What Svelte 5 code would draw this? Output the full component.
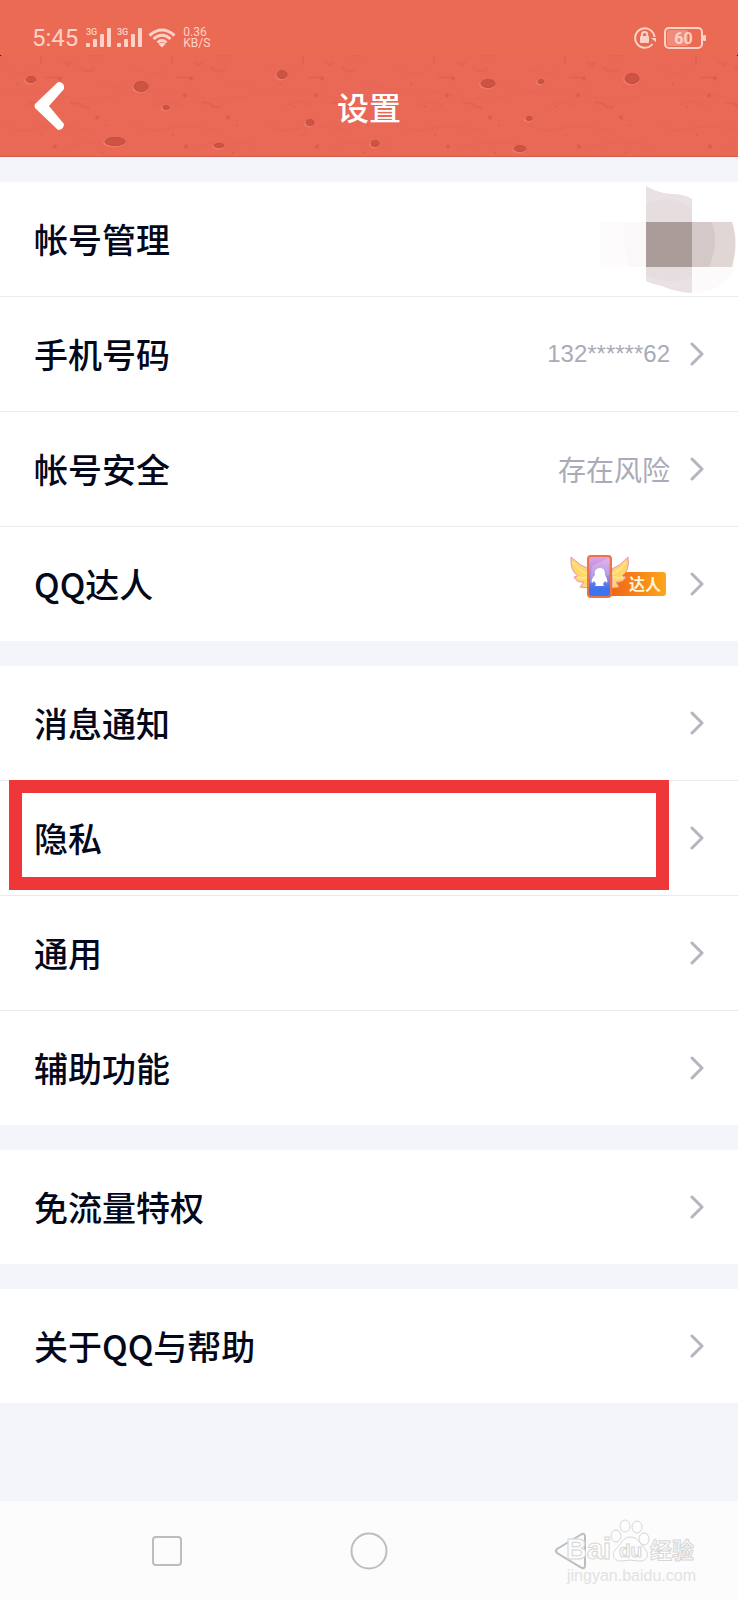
<script lang="ts">
	type Item = {
		label: string;
		value?: string;
		kind?: 'avatar' | 'phone' | 'badge';
		marked?: boolean;
	};

	const groups: Item[][] = [
		[
			{ label: '帐号管理', kind: 'avatar' },
			{ label: '手机号码', value: '132******62', kind: 'phone' },
			{ label: '帐号安全', value: '存在风险' },
			{ label: 'QQ达人', kind: 'badge' }
		],
		[
			{ label: '消息通知' },
			{ label: '隐私', marked: true },
			{ label: '通用' },
			{ label: '辅助功能' }
		],
		[{ label: '免流量特权' }],
		[{ label: '关于QQ与帮助' }]
	];

	// cx, cy, rx, ry
	const pits = [
		[31, 25, 5, 3],
		[141, 32, 7, 5],
		[282, 20, 5, 4],
		[166, 53, 3, 2],
		[115, 87, 10, 4],
		[219, 91, 5, 2],
		[310, 68, 4, 3],
		[375, 89, 4, 3],
		[488, 29, 7, 4],
		[541, 27, 3, 2],
		[529, 64, 3, 2],
		[520, 94, 6, 3],
		[632, 24, 7, 5]
	];
</script>

{#snippet signal()}
	<svg class="signal" viewBox="0 0 26 22" aria-hidden="true">
		<text x="0" y="8" font-size="9" font-weight="500">3G</text>
		<rect x="0" y="16" width="4" height="4" rx="1" />
		<rect x="7" y="12" width="4" height="8" rx="1" />
		<rect x="14" y="7" width="4" height="13" rx="1" />
		<rect x="21" y="1" width="4" height="19" rx="1" />
	</svg>
{/snippet}

<div class="screen">
	<div class="status">
		<span class="time">5:45</span>
		{@render signal()}
		{@render signal()}
		<svg class="wifi" viewBox="0 0 28 22" aria-hidden="true">
			<g fill="none" stroke="#ffd2c8" stroke-width="3">
				<path d="M1.5 8.500Q14-2.500 26.500 8.500" />
				<path d="M5.500 12Q14 4.500 22.500 12" />
				<path d="M9.500 15.500Q14 11.500 18.500 15.500" />
			</g>
			<path d="M10.500 17Q14 14.500 17.500 17L14 20.500Z" />
		</svg>
		<span class="speed">0.36<br />KB/S</span>
		<svg class="lock" viewBox="0 0 22 22" aria-hidden="true">
			<path
				d="M20.500 10A9.700 9.700 0 1 0 18.500 17"
				fill="none"
				stroke="#ffd2c8"
				stroke-width="2"
			/>
			<path d="M17 11H22V15Z" />
			<rect x="6" y="9" width="9" height="7" rx="1" />
			<path d="M8 9.500V7.500a2.600 2.600 0 0 1 5.200 0V9.500" fill="none" stroke="#ffd2c8" stroke-width="2" />
		</svg>
		<svg class="battery" viewBox="0 0 42 22" aria-hidden="true">
			<rect x="3" y="3" width="21" height="16" rx="2" fill="#f08c7a" />
			<rect x="1" y="1" width="37" height="20" rx="4" fill="none" stroke="#ffd2c8" stroke-width="2" />
			<rect x="39" y="8" width="3" height="6" rx="1" />
			<text x="19.500" y="17" font-size="16" font-weight="700" text-anchor="middle">60</text>
		</svg>
	</div>

	<header>
		<svg class="texture" viewBox="0 0 738 102" preserveAspectRatio="xMidYMid slice" aria-hidden="true">
			<defs>
				<pattern id="grain" width="131" height="102" patternUnits="userSpaceOnUse">
					<g fill="none" stroke="#d95745" stroke-linecap="round">
						<path d="M41 2v7M64 8l5 3M69 9l3-1M46 23h12M80 13q6 6 14 2" stroke-width="2" opacity="0.4" />
						<path d="M71 48l8 1 3 3 7 1" stroke-width="2" opacity="0.5" />
						<path d="M88 1h12M25 51q13-8 25 1" stroke-width="2" opacity="0.2" />
						<path d="M0 39q30-7 61 2t70-3M20 77q30-9 70-1" opacity="0.2" />
						<path d="M3 70q22 12 43 2M66 93q24-9 60-3M4 15q17 7 32 1M99 32q15-4 28 4" opacity="0.2" />
					</g>
					<g fill="#d45342" opacity="0.6">
						<circle cx="60" cy="24" r="2" />
						<circle cx="54" cy="41" r="2" />
						<circle cx="97" cy="63" r="2" />
						<circle cx="55" cy="92" r="2" />
						<circle cx="32" cy="52" r="1" />
						<circle cx="18" cy="30" r="1" />
						<circle cx="106" cy="71" r="1" />
						<circle cx="42" cy="80" r="1" />
						<circle cx="102" cy="98" r="1" />
					</g>
				</pattern>
			</defs>
			<rect width="738" height="102" fill="url(#grain)" />
			{#each pits as [cx, cy, rx, ry]}
				<ellipse cx={cx - 1} cy={cy + 1} rx={rx + 1} ry={ry + 1} fill="#f28474" opacity="0.6" />
				<ellipse {cx} {cy} {rx} {ry} fill="#cc5443" stroke="#c64d3d" />
			{/each}
			<path d="M0 0h4q-3 0-4 2zM738 0h-4q3 0 4 2z" fill="#1b0c0a" />
		</svg>
		<button class="back" aria-label="返回">
			<svg viewBox="0 0 30 48" aria-hidden="true">
				<path d="M25 0Q31 1 30 7L15 24 30 42Q30 47 25 48Q23 48 22 46L2 27Q-1 24 2 21L22 2Q23 0 25 0Z" />
			</svg>
		</button>
		<h1>设置</h1>
	</header>

	<main>
		{#each groups as group}
			<ul>
				{#each group as item}
					<li>
						<button class="row" class:flush={item.kind === 'avatar'}>
							<span class="label">{item.label}</span>
							{#if item.kind === 'avatar'}
								<svg class="avatar" viewBox="0 0 136 110" aria-hidden="true">
									<rect y="38" width="46" height="45" fill="#fdfbfc" />
									<path d="M24 38h22v45H30Q22 60 24 38Z" fill="#faf8f9" />
									<path d="M92 83h43Q126 108 92 108Z" fill="#fcfafb" />
									<path d="M46 2Q58 9 72 10Q84 10 92 15V109Q75 108 62 102 55 101 46 97Z" fill="#e9e1e3" />
									<path d="M46 20Q72 10 92 24V38H46ZM46 83h46v10q-22 9-46-2Z" fill="#e6dddf" />
									<path d="M92 38h40q7 20 0 45H92Z" fill="#e0d6d4" />
									<path d="M92 38h20q7 22-3 45H92Z" fill="#d5c8c8" />
									<rect x="46" y="38" width="46" height="45" fill="#aa9c99" />
								</svg>
							{:else}
								{#if item.kind === 'badge'}
									<svg class="badge" viewBox="0 0 100 60" aria-hidden="true">
										<defs>
											<linearGradient id="tag" x2="1">
												<stop stop-color="#ee5c16" />
												<stop offset="1" stop-color="#fda61b" />
											</linearGradient>
											<linearGradient id="phone" x2="0" y2="1">
												<stop stop-color="#e5a2e4" />
												<stop offset="0.500" stop-color="#9c86e4" />
												<stop offset="0.800" stop-color="#3d72ee" />
												<stop offset="1" stop-color="#3978f2" />
											</linearGradient>
										</defs>
										<rect x="34" y="18" width="62" height="24" rx="3" fill="url(#tag)" />
										<g fill="#ffd66a" stroke="#ed8db2" stroke-linejoin="round">
											<path d="M1 3Q10 12 19 15V34L10 33 14 28Q7 29 4 23L8 22Q0 17 1 3Z" />
											<path d="M58 3Q50 12 42 15V34L49 33 46 28Q53 29 56 23L52 22Q60 17 58 3Z" />
										</g>
										<path d="M3 8q6 9 15 12M7 23q6 2 11 0M56 8q-5 9-14 12M53 23q-5 2-10 0" fill="none" stroke="#ffe58a" stroke-width="2" />
										<rect x="18" y="2" width="23" height="41" rx="3" fill="url(#phone)" stroke="#ed7442" stroke-width="2" />
										<path d="M22 12 39 4V21L20 29Z" fill="#ffffff" opacity="0.2" />
										<path
											d="M30 14c-4 0-6 3-5 7-3 3-4 6-3 8l2-2 2 3-1 2h9l-1-2 2-3 2 2c1-2 0-5-2-8 0-4-1-7-5-7Z"
											fill="#ffffff"
										/>
										<text x="75" y="36" text-anchor="middle">达人</text>
									</svg>
								{:else if item.value}
									<span class="value" class:phone={item.kind === 'phone'}>{item.value}</span>
								{/if}
								<svg class="chevron" viewBox="0 0 14 24" aria-hidden="true">
									<path d="M2 2 12 12 2 22" />
								</svg>
							{/if}
						</button>
						{#if item.marked}
							<div class="mark"></div>
						{/if}
					</li>
				{/each}
			</ul>
		{/each}
	</main>

	<nav>
		<button aria-label="最近任务">
			<svg viewBox="0 0 40 40" aria-hidden="true"><rect x="6" y="6" width="28" height="28" rx="3" /></svg>
		</button>
		<button aria-label="主屏幕">
			<svg viewBox="0 0 40 40" aria-hidden="true"><circle cx="20" cy="20" r="17.500" /></svg>
		</button>
		<button aria-label="返回上一级">
			<svg viewBox="0 0 40 40" aria-hidden="true">
				<path d="M31 3 6 18q-2 2 0 4l25 15q3 1 3-3V6q0-4-3-3Z" />
			</svg>
		</button>
		<svg class="watermark" viewBox="0 0 136 66" aria-hidden="true">
			<g fill="#fdfdfd" stroke="#d6d6d6">
				<text class="brand" x="1" y="40" font-size="29">Bai</text>
				<ellipse cx="51" cy="17" rx="5" ry="6" />
				<ellipse cx="60" cy="7" rx="5" ry="6" />
				<ellipse cx="72" cy="8" rx="5" ry="6" />
				<ellipse cx="79" cy="20" rx="5" ry="6" />
				<path d="M65 18c-7 0-9 8-14 12-6 6-1 13 6 12q8-2 16 0c9 1 12-6 7-12-5-5-7-12-15-12Z" />
				<text class="brand" x="54" y="38" font-size="19">du</text>
				<text class="brand cjk" x="85" y="39" font-size="22">经验</text>
				<text class="site" x="2" y="62" font-size="16">jingyan.baidu.com</text>
			</g>
		</svg>
	</nav>
</div>

<style>
	:global(body) {
		margin: 0;
	}
	.screen {
		display: flex;
		flex-direction: column;
		min-height: 100vh;
		background: #f4f5fa;
		color: #03081a;
		font-family: 'Noto Sans CJK SC', sans-serif;
	}
	button {
		padding: 0;
		border: 0;
		background: none;
		color: inherit;
		font: inherit;
		cursor: pointer;
	}
	svg {
		display: block;
		flex: none;
	}

	.status {
		box-sizing: border-box;
		display: flex;
		align-items: center;
		height: 55px;
		padding: 20px 32px 0;
		background: #ea6a53;
		color: #ffd2c8;
		fill: #ffd2c8;
		font-family: Roboto, sans-serif;
	}
	.time {
		margin-right: 8px;
		font-size: 24px;
		line-height: 24px;
	}
	.signal {
		width: 26px;
		height: 22px;
		margin-right: 5px;
	}
	.wifi {
		width: 28px;
		height: 22px;
	}
	.speed {
		margin: 0 auto 0 7px;
		font-size: 12px;
		line-height: 11px;
	}
	.lock {
		width: 22px;
		height: 22px;
		margin-right: 8px;
	}
	.battery {
		width: 42px;
		height: 22px;
	}

	header {
		position: relative;
		box-sizing: border-box;
		display: grid;
		grid-template-columns: 1fr auto 1fr;
		align-items: center;
		height: 102px;
		padding: 0 34px;
		border-bottom: 1px solid #cf5c4c;
		background: #ea6856;
		color: #ffffff;
	}
	.texture {
		position: absolute;
		inset: 0;
		width: 100%;
		height: 100%;
	}
	.back,
	h1 {
		position: relative;
	}
	.back {
		justify-self: start;
	}
	.back svg {
		width: 30px;
		height: 48px;
		fill: #ffffff;
	}
	h1 {
		margin: 0;
		font-size: 32px;
		font-weight: 500;
		line-height: 48px;
	}

	main {
		flex: 1;
		display: flex;
		flex-direction: column;
		gap: 25px;
		padding: 25px 0;
	}
	ul {
		margin: 0;
		padding: 0;
		list-style: none;
		background: #ffffff;
	}
	li {
		position: relative;
	}
	li + li {
		border-top: 1px solid #e9eaed;
	}
	.row {
		display: flex;
		align-items: center;
		width: 100%;
		height: 114px;
		padding: 0 34px;
		text-align: left;
	}
	.row.flush {
		padding-right: 2px;
	}
	.label {
		flex: 1;
		font-size: 34px;
		font-weight: 500;
		line-height: 48px;
	}
	.value {
		color: #a9acb8;
		font-size: 28px;
		line-height: 40px;
	}
	.phone {
		font-family: 'Liberation Sans', sans-serif;
		font-size: 24px;
	}
	.avatar {
		width: 136px;
		height: 110px;
	}
	.badge {
		width: 100px;
		height: 60px;
	}
	.badge text {
		fill: #fff6d8;
		font-size: 16px;
		font-weight: 700;
	}
	.chevron {
		width: 14px;
		height: 24px;
		margin-left: 20px;
		fill: none;
		stroke: #b3b5bf;
		stroke-width: 3;
		stroke-linecap: round;
		stroke-linejoin: round;
	}
	.mark {
		position: absolute;
		inset: -1px 69px 5px 9px;
		border: 13px solid #ef3638;
		pointer-events: none;
	}

	nav {
		position: relative;
		display: grid;
		grid-template-columns: repeat(3, 1fr);
		align-items: center;
		justify-items: center;
		height: 99px;
		padding: 0 9%;
		background: #fcfcfc;
	}
	nav button svg {
		width: 40px;
		height: 40px;
		fill: none;
		stroke: #bdbdbd;
		stroke-width: 2;
	}
	.watermark {
		position: absolute;
		right: 37px;
		bottom: 15px;
		width: 136px;
		height: 66px;
	}
	.brand {
		font-family: 'Liberation Sans', sans-serif;
		font-weight: 700;
	}
	.cjk {
		font-family: 'Noto Sans CJK SC', sans-serif;
	}
	.site {
		stroke: none;
		fill: #e2e2e2;
		font-family: 'Liberation Sans', sans-serif;
	}
</style>
